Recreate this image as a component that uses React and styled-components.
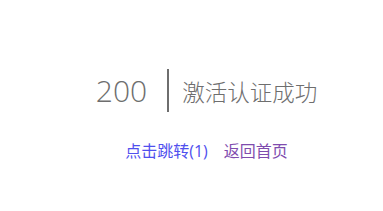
import React from "react";
import styled, { createGlobalStyle } from "styled-components";

const Global = createGlobalStyle`
  html, body { margin: 0; padding: 0; background: #fff; }
  body { font-family: "Open Sans", "Noto Sans CJK SC", sans-serif; }
`;

const Page = styled.div`
  width: 383px;
  height: 211px;
  display: flex;
  flex-direction: column;
  align-items: center;
  padding: 69px 0 0 30px;
  box-sizing: border-box;
`;

const Head = styled.div`
  display: flex;
  align-items: center;
  color: #6e6e6e;
  height: 43px;
`;

const Code = styled.span`
  font-size: 30px;
  font-weight: 300;
  line-height: 43px;
  padding-right: 20px;
  border-right: 2px solid #6e6e6e;
  margin-right: 13px;
`;

const Msg = styled.span`
  font-size: 22.5px;
  font-weight: 300;
  font-family: "Noto Sans CJK SC", sans-serif;
`;

const Links = styled.div`
  display: flex;
  gap: 16px;
  margin-top: 28px;
  font-size: 16px;
  line-height: 22px;
  font-family: "Open Sans", "Noto Sans CJK SC", sans-serif;
`;

const A = styled.a`
  color: ${({ $visited }) => ($visited ? "#7f4cae" : "#5050ee")};
  text-decoration: none;
`;

export default function App() {
  return (
    <>
      <Global />
      <Page>
        <Head>
          <Code>200</Code>
          <Msg>激活认证成功</Msg>
        </Head>
        <Links>
          <A>点击跳转(1)</A>
          <A $visited>返回首页</A>
        </Links>
      </Page>
    </>
  );
}
